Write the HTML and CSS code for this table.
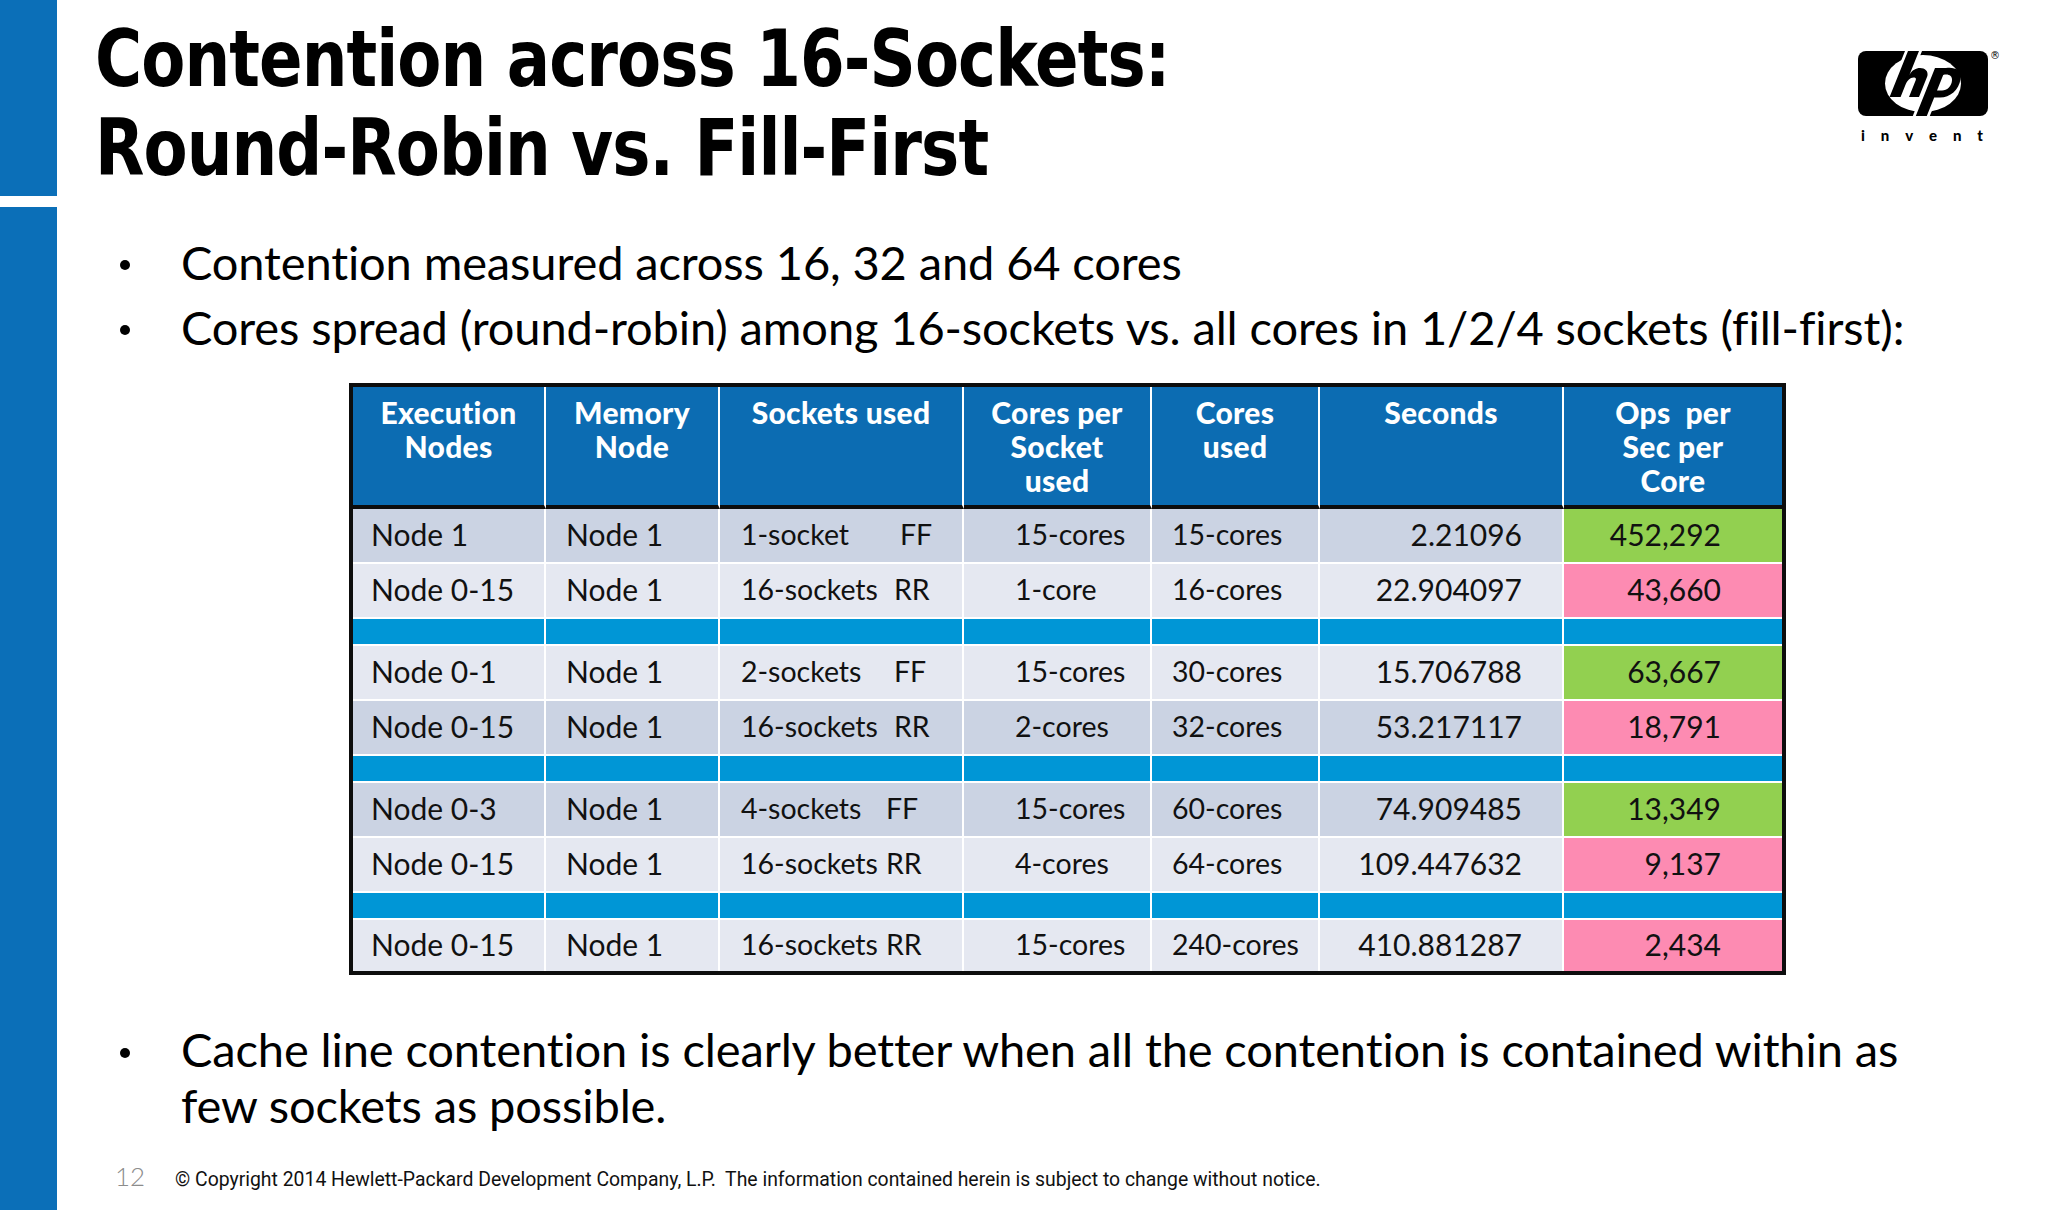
FILE: index.html
```html
<!DOCTYPE html>
<html lang="en">
<head>
<meta charset="utf-8">
<title>Contention across 16-Sockets</title>
<link rel="stylesheet" href="styles.css">
</head>
<body>
<div class="slide">
  <div class="sidebar">
    <div class="bar-top"></div>
    <div class="bar-bottom"></div>
  </div>
  <div class="main">
    <header class="head">
      <h1 class="title">Contention across 16-Sockets:<br>Round-Robin vs. Fill-First</h1>
      <div class="logo">
        <svg class="hp" width="142" height="68" viewBox="0 0 142 68">
          <rect x="0" y="3" width="130" height="65" rx="8" fill="#000"/>
          <ellipse cx="65" cy="35.5" rx="38" ry="28.5" fill="#fff"/>
          <polygon points="48.2,0 65.2,0 56.4,22 39.4,22" fill="#fff"/>
          <polygon points="63.6,46 80.6,46 70.6,71 53.6,71" fill="#fff"/>
          <path d="M31.6,49 L50,3 L61,3 L51.4,27 C54,22 58,20 62,20 C67,20 70.5,23 69.4,28 L61,49 L51,49 L57.8,32 C58.5,30 57,29.5 55.5,29.5 C52,29.5 49.5,32.5 47.8,36 L42.6,49 Z" fill="#000"/>
          <path d="M57.8,68 L77,20 L88,20 C96,18.5 104,22 102.5,31 C101,42 92,49.5 82,49.5 L76.2,49.5 L68.8,68 Z" fill="#000"/>
          <path d="M85.2,27 C90,25.5 94.5,27.5 94,32.5 C93.5,38.5 89,42.5 84,42.5 L79,42.5 Z" fill="#fff"/>
          <text x="132" y="11" font-size="10" font-family="DejaVu Sans, sans-serif" fill="#000">®</text>
        </svg>
        <div class="invent"><span>i</span><span>n</span><span>v</span><span>e</span><span>n</span><span>t</span></div>
      </div>
    </header>

    <ul class="bullets top">
      <li>Contention measured across 16, 32 and 64 cores</li>
      <li>Cores spread (round-robin) among 16-sockets vs. all cores in 1/2/4 sockets (fill-first):</li>
    </ul>

    <table class="data">
      <colgroup>
        <col class="c1"><col class="c2"><col class="c3"><col class="c4"><col class="c5"><col class="c6"><col class="c7">
      </colgroup>
      <thead>
        <tr>
          <th>Execution<br>Nodes</th>
          <th>Memory<br>Node</th>
          <th>Sockets used</th>
          <th>Cores per<br>Socket<br>used</th>
          <th>Cores<br>used</th>
          <th>Seconds</th>
          <th>Ops&nbsp; per<br>Sec per<br>Core</th>
        </tr>
      </thead>
      <tbody>
        <tr class="dark">
          <td>Node 1</td><td>Node 1</td><td><span class="lbl w1">1-socket</span>FF</td><td>15-cores</td><td>15-cores</td><td>2.21096</td><td class="good">452,292</td>
        </tr>
        <tr class="light">
          <td>Node 0-15</td><td>Node 1</td><td><span class="lbl w2">16-sockets</span>RR</td><td>1-core</td><td>16-cores</td><td>22.904097</td><td class="bad">43,660</td>
        </tr>
        <tr class="sep"><td></td><td></td><td></td><td></td><td></td><td></td><td></td></tr>
        <tr class="light">
          <td>Node 0-1</td><td>Node 1</td><td><span class="lbl w2">2-sockets</span>FF</td><td>15-cores</td><td>30-cores</td><td>15.706788</td><td class="good">63,667</td>
        </tr>
        <tr class="dark">
          <td>Node 0-15</td><td>Node 1</td><td><span class="lbl w2">16-sockets</span>RR</td><td>2-cores</td><td>32-cores</td><td>53.217117</td><td class="bad">18,791</td>
        </tr>
        <tr class="sep"><td></td><td></td><td></td><td></td><td></td><td></td><td></td></tr>
        <tr class="dark">
          <td>Node 0-3</td><td>Node 1</td><td><span class="lbl w3">4-sockets</span>FF</td><td>15-cores</td><td>60-cores</td><td>74.909485</td><td class="good">13,349</td>
        </tr>
        <tr class="light">
          <td>Node 0-15</td><td>Node 1</td><td><span class="lbl w3">16-sockets</span>RR</td><td>4-cores</td><td>64-cores</td><td>109.447632</td><td class="bad">9,137</td>
        </tr>
        <tr class="sep"><td></td><td></td><td></td><td></td><td></td><td></td><td></td></tr>
        <tr class="light last">
          <td>Node 0-15</td><td>Node 1</td><td><span class="lbl w3">16-sockets</span>RR</td><td>15-cores</td><td>240-cores</td><td>410.881287</td><td class="bad">2,434</td>
        </tr>
      </tbody>
    </table>

    <ul class="bullets bottom">
      <li><span>Cache line contention is clearly better when all the contention is contained within as<br>few sockets as possible.</span></li>
    </ul>

    <footer class="foot">
      <span class="page">12</span>
      <span class="copy">© Copyright 2014 Hewlett-Packard Development Company, L.P.&nbsp; The information contained herein is subject to change without notice.</span>
    </footer>
  </div>
</div>
</body>
</html>
```
FILE: styles.css
```css
* {
  box-sizing: border-box;
}

html,
body {
  margin: 0;
  padding: 0;
}

body {
  width: 2048px;
  height: 1210px;
  overflow: hidden;
  background: #ffffff;
  color: #000000;
  font-family: Lato, "Noto Sans", sans-serif;
  font-variant-ligatures: none;
}

.slide {
  display: flex;
  width: 2048px;
  height: 1210px;
}

/* left blue band */
.sidebar {
  width: 57px;
  flex-shrink: 0;
  display: flex;
  flex-direction: column;
}

.bar-top {
  height: 196px;
  background: #0b6fb8;
}

.bar-bottom {
  flex: 1;
  margin-top: 11px;
  background: #0b6fb8;
}

.main {
  flex: 1;
  display: flex;
  flex-direction: column;
  padding: 0 48px 0 38px;
}

/* heading */
.head {
  display: flex;
  justify-content: space-between;
  align-items: flex-start;
}

.title {
  margin: 15px 0 0;
  font-family: "DejaVu Sans Condensed", "DejaVu Sans", sans-serif;
  font-weight: bold;
  font-size: 78px;
  line-height: 89px;
  letter-spacing: -1px;
  white-space: nowrap;
  transform: scaleX(0.915);
  transform-origin: left top;
}

.logo {
  margin-top: 48px;
  width: 142px;
}

.hp {
  display: block;
}

.invent {
  display: flex;
  justify-content: space-between;
  width: 130px;
  margin-top: 10px;
  padding: 0 5px 0 3px;
  font-family: Lato, sans-serif;
  font-weight: 900;
  font-size: 15px;
  line-height: 18px;
}

/* bullets */
.bullets {
  list-style: none;
  margin: 0;
  padding: 0;
  font-size: 47px;
  letter-spacing: -0.12px;
  white-space: nowrap;
}

.bullets li {
  display: flex;
  align-items: flex-start;
  padding-left: 25px;
}

.bullets li::before {
  content: "";
  flex-shrink: 0;
  width: 10px;
  height: 10px;
  margin-right: 51px;
  border-radius: 50%;
  background: #000000;
}

.bullets.top {
  margin-top: 37px;
  line-height: 65px;
}

.bullets.top li::before {
  margin-top: 30px;
}

.bullets.bottom {
  margin-top: 46px;
  line-height: 56px;
}

.bullets.bottom li::before {
  margin-top: 27px;
}

/* table */
.data {
  margin: 23px 0 0 254px;
  width: 1437px;
  table-layout: fixed;
  border-collapse: separate;
  border-spacing: 0;
  border: 4px solid #0d0d0d;
  font-size: 30px;
  color: #111111;
}

.c1 { width: 193px; }
.c2 { width: 174px; }
.c3 { width: 244px; }
.c4 { width: 188px; }
.c5 { width: 168px; }
.c6 { width: 244px; }
.c7 { width: 218px; }

.data th {
  height: 122px;
  padding: 8px 4px 0;
  vertical-align: top;
  text-align: center;
  background: #0c6cb2;
  color: #ffffff;
  font-weight: 900;
  font-size: 30px;
  line-height: 34px;
  letter-spacing: 0.3px;
  border-right: 2px solid #ffffff;
  border-bottom: 4px solid #0d0d0d;
}

.data th:last-child,
.data td:last-child {
  border-right: 0;
}

.data td {
  height: 55px;
  padding: 0 0 3px;
  vertical-align: middle;
  white-space: nowrap;
  border-right: 2px solid #ffffff;
  border-bottom: 2px solid #ffffff;
  line-height: 34px;
}

.data tr.last td {
  height: 51px;
  border-bottom: 0;
}

.data tr.sep td {
  height: 27px;
  padding: 0;
  background: #0096d6;
}

.data tr.dark td {
  background: #cbd3e3;
}

.data tr.light td {
  background: #e5e8f1;
}

.data tr td.good {
  background: #92d050;
}

.data tr td.bad {
  background: #fd8bb2;
}

.data td:nth-child(1) { padding-left: 18px; }
.data td:nth-child(2) { padding-left: 20px; }
.data td:nth-child(3) { padding-left: 21px; font-size: 28.5px; }
.data td:nth-child(4) { padding-left: 51px; font-size: 28.5px; }
.data td:nth-child(5) { padding-left: 20px; font-size: 28.5px; }
.data td:nth-child(6) { padding-right: 40px; text-align: right; }
.data td:nth-child(7) { padding-right: 61px; text-align: right; }

.lbl {
  display: inline-block;
}

.lbl.w1 { width: 159px; }
.lbl.w2 { width: 153px; }
.lbl.w3 { width: 145px; }

/* footer */
.foot {
  display: flex;
  align-items: baseline;
  margin-top: 27px;
  padding-left: 20px;
}

.page {
  width: 60px;
  flex-shrink: 0;
  font-family: Lato, sans-serif;
  font-weight: 300;
  font-size: 26px;
  color: #8c8c8c;
}

.copy {
  font-family: Roboto, "Liberation Sans", sans-serif;
  font-size: 19.4px;
  line-height: 22px;
  color: #111111;
  white-space: nowrap;
}
```
